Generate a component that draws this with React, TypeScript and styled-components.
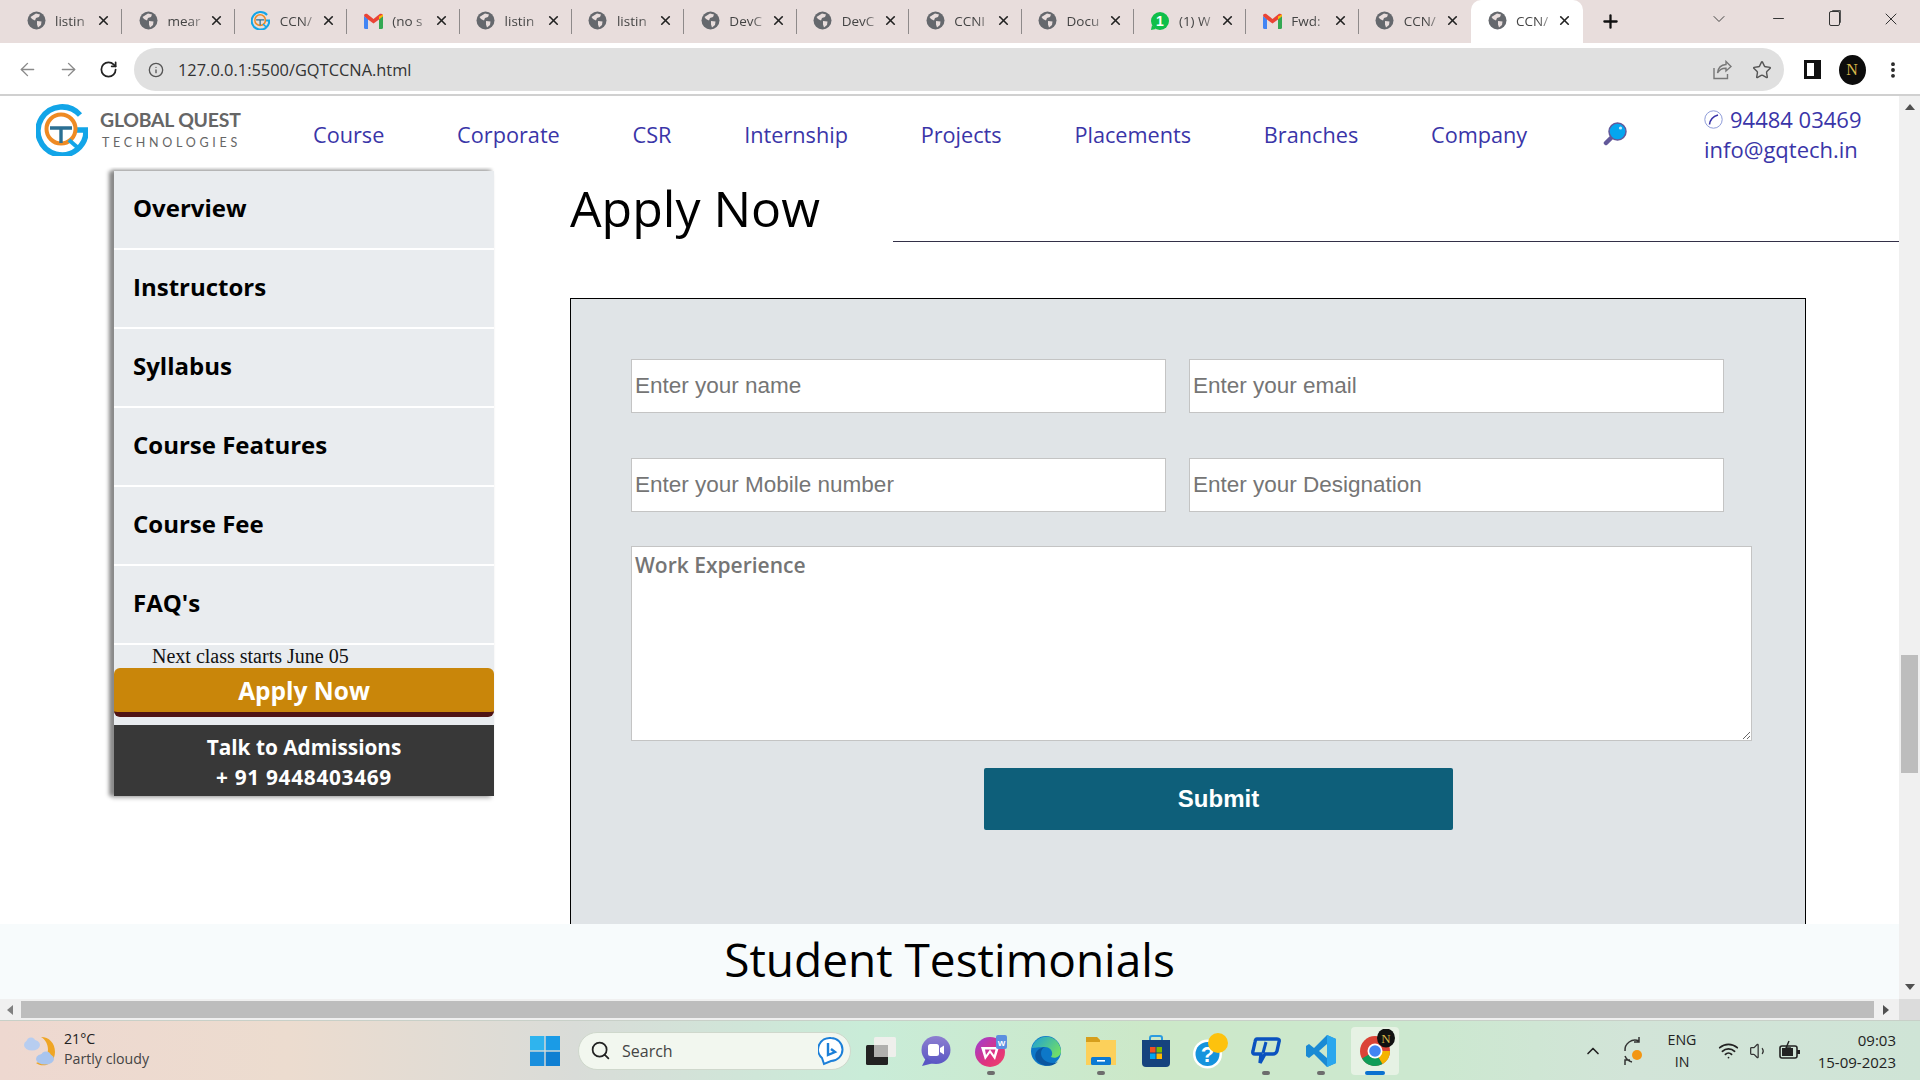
import React from 'react';
import styled, { createGlobalStyle } from 'styled-components';
import { ArrowLeft, ArrowRight, RotateCw, Info, Star, X, Plus, ChevronDown, Minus, EllipsisVertical, Search as SearchIcon, ChevronUp, Wifi, Volume1 } from 'lucide-react';

const GlobalStyle = createGlobalStyle`
  html, body {
    margin: 0;
    padding: 0;
    width: 1920px;
    height: 1080px;
    overflow: hidden;
    background: #fff;
    font-family: "Open Sans", "Liberation Sans", sans-serif;
  }
  * { box-sizing: border-box; }
`;

const tabs = [
  { label: 'listin', icon: 'globe' },
  { label: 'mear', icon: 'globe' },
  { label: 'CCN/', icon: 'gq' },
  { label: '(no s', icon: 'gmail' },
  { label: 'listin', icon: 'globe' },
  { label: 'listin', icon: 'globe' },
  { label: 'DevC', icon: 'globe' },
  { label: 'DevC', icon: 'globe' },
  { label: 'CCNI', icon: 'globe' },
  { label: 'Docu', icon: 'globe' },
  { label: '(1) W', icon: 'whatsapp' },
  { label: 'Fwd:', icon: 'gmail' },
  { label: 'CCN/', icon: 'globe' },
  { label: 'CCN/', icon: 'globe', active: true },
];

const navItems = ['Course', 'Corporate', 'CSR', 'Internship', 'Projects', 'Placements', 'Branches', 'Company'];
const sideItems = ['Overview', 'Instructors', 'Syllabus', 'Course Features', 'Course Fee', "FAQ's"];

const GlobeIcon = () => (
  <svg width="19" height="19" viewBox="0 0 19 19">
    <circle cx="9.5" cy="9.5" r="9" fill="#65686d" />
    <path d="M9 2.5 L13 3.5 L12 6 L9 7 L8 9.5 L5 8 L3.5 6 Z M10 10 L14.5 10.5 L14 14 L11 16.5 L10 13.5 Z" fill="#e8dddc" />
  </svg>
);

const GmailIcon = () => (
  <svg width="19" height="16" viewBox="0 0 19 16">
    <path d="M0 3 L0 14.5 Q0 16 1.5 16 L4 16 L4 6 Z" fill="#4285f4" />
    <path d="M15 6 L15 16 L17.5 16 Q19 16 19 14.5 L19 3 Z" fill="#34a853" />
    <path d="M0 3 Q0 0 3 0.8 L9.5 6 L16 0.8 Q19 0 19 3 L15 6.5 L9.5 10.5 L4 6.5 Z" fill="#ea4335" />
    <path d="M15 6.5 L19 3 L19 1.5 L15 3.5 Z" fill="#fbbc04" />
  </svg>
);

const WhatsIcon = () => (
  <svg width="20" height="20" viewBox="0 0 20 20">
    <circle cx="10" cy="10" r="9" fill="#0fbf4a" />
    <path d="M2 14 L1 19 L6 18 Z" fill="#0fbf4a" />
    <text x="10" y="15" fontSize="14" fontWeight="700" textAnchor="middle" fill="#fff" fontFamily="Liberation Sans">1</text>
  </svg>
);

const GqIcon = ({ size = 19 }: { size?: number }) => (
  <svg width={size} height={size} viewBox="0 0 52 52">
    <path d="M44 11 A24 24 0 1 0 50 26 L38 26" fill="none" stroke="#12a5e8" strokeWidth="5.5" />
    <circle cx="25" cy="25" r="14.5" fill="none" stroke="#ee8a23" strokeWidth="4" />
    <path d="M14 24 H36 M25 24 V39" fill="none" stroke="#2b6f93" strokeWidth="3.4" />
    <path d="M33 36 L41 43" stroke="#12a5e8" strokeWidth="4" />
  </svg>
);

const tabIcon = (name: string) => {
  if (name === 'gq') return <GqIcon />;
  if (name === 'gmail') return <GmailIcon />;
  if (name === 'whatsapp') return <WhatsIcon />;
  return <GlobeIcon />;
};

export default function App() {
  return (
    <Screen>
      <GlobalStyle />
      <TabStrip>
        {tabs.map((tab, i) => (
          <Tab key={i} $active={!!tab.active} $last={!!tab.active || i === tabs.length - 2}>
            <TabIcon>{tabIcon(tab.icon)}</TabIcon>
            <TabTitle>{tab.label}</TabTitle>
            <X size={15} strokeWidth={2.6} color="#222" />
          </Tab>
        ))}
        <NewTab><Plus size={21} strokeWidth={2.6} color="#111" /></NewTab>
        <WindowControls>
          <ChevronDown size={20} strokeWidth={1.2} color="#444" />
          <Minus size={17} strokeWidth={1.4} color="#333" />
          <RestoreIcon />
          <X size={20} strokeWidth={1.2} color="#333" />
        </WindowControls>
      </TabStrip>

      <AddressRow>
        <NavButtons>
          <ArrowLeft size={21} strokeWidth={1.6} color="#8a8a8a" />
          <ArrowRight size={21} strokeWidth={1.6} color="#8a8a8a" />
          <RotateCw size={19} strokeWidth={2.2} color="#222" />
        </NavButtons>
        <Omnibox>
          <Info size={16} strokeWidth={2} color="#555" />
          <Url>127.0.0.1:5500/GQTCCNA.html</Url>
          <OmniActions>
            <svg width="20" height="20" viewBox="0 0 20 20" fill="none" stroke="#777" strokeWidth="1.4">
              <path d="M14 1.5 L19 6.5 L14 11 V8.2 C10 8 7.5 9.5 5.5 13 C6 8 9 4.8 14 4.5 Z" />
              <path d="M2 8 V18.5 H15.5 V14" />
            </svg>
            <Star size={20} strokeWidth={1.7} color="#555" />
          </OmniActions>
        </Omnibox>
        <ProfileActions>
          <SidePanelIcon />
          <Avatar>N</Avatar>
          <EllipsisVertical size={20} strokeWidth={2.6} color="#222" />
        </ProfileActions>
      </AddressRow>

      <Viewport>
        <Page>
          <Header>
            <Brand>
              <GqIcon size={52} />
              <BrandText>
                <BrandName>GLOBAL QUEST</BrandName>
                <BrandSub>TECHNOLOGIES</BrandSub>
              </BrandText>
            </Brand>
            <Nav>
              {navItems.map((item) => <NavLink key={item}>{item}</NavLink>)}
              <svg width="24" height="24" viewBox="0 0 24 24">
                <path d="M10 14 L3 21" stroke="#62589a" strokeWidth="4.5" strokeLinecap="round" />
                <circle cx="14.5" cy="9.5" r="8.5" fill="#04a5ef" stroke="#62589a" strokeWidth="1.5" />
                <circle cx="17.5" cy="6" r="1.6" fill="#bfeafc" />
              </svg>
            </Nav>
            <Contact>
              <ContactLine>
                <svg width="19" height="19" viewBox="0 0 19 19" fill="none">
                  <circle cx="9.5" cy="9.5" r="8.7" stroke="#8d9bd8" strokeWidth="1" />
                  <path d="M5.5 14.5 C6 10 9 6.5 14 5" stroke="#3a35a8" strokeWidth="1.6" />
                </svg>
                94484 03469
              </ContactLine>
              <ContactLine>info@gqtech.in</ContactLine>
            </Contact>
          </Header>

          <Main>
            <Sidebar>
              {sideItems.map((item) => <SideItem key={item}>{item}</SideItem>)}
              <NextClass>Next class starts June 05</NextClass>
              <ApplyButton>Apply Now</ApplyButton>
              <Admissions>Talk to Admissions<AdmissionsPhone>+ 91 9448403469</AdmissionsPhone></Admissions>
            </Sidebar>
            <Content>
              <HeadingRow>
                <Heading>Apply Now</Heading>
                <HeadingRule />
              </HeadingRow>
              <FormBox>
                <FieldRow>
                  <Field placeholder="Enter your name" />
                  <Field placeholder="Enter your email" />
                </FieldRow>
                <FieldRow>
                  <Field placeholder="Enter your Mobile number" />
                  <Field placeholder="Enter your Designation" />
                </FieldRow>
                <Experience placeholder="Work Experience" />
                <Submit type="button">Submit</Submit>
              </FormBox>
            </Content>
          </Main>

          <Band>Student Testimonials</Band>
        </Page>
        <VScroll>
          <ArrowUp />
          <VThumb />
          <ArrowDown />
        </VScroll>
      </Viewport>

      <HScroll>
        <ArrowLeftShape />
        <HThumb />
        <ArrowRightShape />
        <Corner />
      </HScroll>

      <Taskbar>
        <Weather>
          <svg width="32" height="34" viewBox="0 0 32 34">
            <path d="M17 3 C27 9 27 25 12 29 C20 35 31 29 31 18 C31 9 25 3 17 3 Z" fill="#efa524" />
            <ellipse cx="8" cy="11" rx="8" ry="5.5" fill="#b7cdf0" />
            <ellipse cx="7" cy="8" rx="4.5" ry="4.5" fill="#b7cdf0" />
            <ellipse cx="21" cy="25" rx="9" ry="5.5" fill="#a9c5ee" />
            <ellipse cx="22" cy="22" rx="5" ry="4.5" fill="#a9c5ee" />
          </svg>
          <WeatherText>
            <span>21°C</span>
            <WeatherSub>Partly cloudy</WeatherSub>
          </WeatherText>
        </Weather>
        <TaskCenter>
          <svg width="30" height="30" viewBox="0 0 30 30">
            <rect width="14.3" height="14.3" fill="#2fb4ee" />
            <rect x="15.7" width="14.3" height="14.3" fill="#1a9be6" />
            <rect y="15.7" width="14.3" height="14.3" fill="#1a8fdd" />
            <rect x="15.7" y="15.7" width="14.3" height="14.3" fill="#0f7fd2" />
          </svg>
          <SearchPill>
            <SearchIcon size={21} strokeWidth={2} color="#222" />
            <SearchLabel>Search</SearchLabel>
            <svg width="26" height="30" viewBox="0 0 26 30" fill="none">
              <path d="M13 2 A11.5 11.5 0 0 1 13 25 L6 28 L4 22 A11.5 11.5 0 0 1 13 2 Z" stroke="#1b7fd8" strokeWidth="2" fill="#fff" />
              <path d="M10 7 V19 L17 16 L13 13" stroke="#1b7fd8" strokeWidth="2.4" />
            </svg>
          </SearchPill>
          <TaskIcon>
            <svg width="30" height="28" viewBox="0 0 30 28">
              <rect x="0" y="8" width="22" height="20" rx="1.5" fill="#222" />
              <rect x="8" y="0" width="22" height="20" rx="1.5" fill="#efefec" />
              <rect x="8" y="8" width="14" height="12" fill="#b0b0ae" />
            </svg>
          </TaskIcon>
          <TaskIcon>
            <svg width="30" height="30" viewBox="0 0 30 30">
              <defs>
                <linearGradient id="meetFill" x1="0" y1="0" x2="0" y2="1">
                  <stop offset="0" stopColor="#8d7fd0" />
                  <stop offset="1" stopColor="#5a56c4" />
                </linearGradient>
              </defs>
              <ellipse cx="15" cy="14" rx="14.5" ry="14" fill="url(#meetFill)" />
              <path d="M5 22 L1 30 L13 27 Z" fill="#5a56c4" />
              <rect x="7" y="8" width="11" height="12" rx="2.5" fill="#fff" />
              <path d="M19 12 L23 9.5 V18.5 L19 16 Z" fill="#fff" />
            </svg>
          </TaskIcon>
          <TaskIcon $running>
            <svg width="32" height="32" viewBox="0 0 32 32">
              <defs>
                <linearGradient id="wpsFill" x1="0" y1="0" x2="1" y2="1">
                  <stop offset="0" stopColor="#9a3fd8" />
                  <stop offset="0.6" stopColor="#e0327e" />
                  <stop offset="1" stopColor="#f0456a" />
                </linearGradient>
              </defs>
              <circle cx="15" cy="17" r="15" fill="url(#wpsFill)" />
              <path d="M6 12 H24 L20 25 L15 18 L10 25 Z M10 14.5 L11 20 L15 14.5 L19 20 L20.5 14.5 Z" fill="#fff" fillRule="evenodd" />
              <rect x="21" y="0" width="11" height="14" rx="2" fill="#5b8fe0" />
              <text x="26.5" y="10.5" fontSize="8" fontWeight="700" textAnchor="middle" fill="#fff" fontFamily="Liberation Sans">W</text>
            </svg>
          </TaskIcon>
          <TaskIcon>
            <svg width="30" height="30" viewBox="0 0 30 30">
              <defs>
                <linearGradient id="edgeTop" x1="0" y1="0" x2="1" y2="0.6">
                  <stop offset="0" stopColor="#1c9ed8" />
                  <stop offset="1" stopColor="#6fdc6a" />
                </linearGradient>
              </defs>
              <circle cx="15" cy="15" r="15" fill="#0d78c8" />
              <path d="M1 12 C4 -3 28 -4 30 15 C30 21 24 23 20 21 C23 17 20 11 14 11 C8 11 3 12 1 12 Z" fill="url(#edgeTop)" />
              <path d="M14 11 C7 14 9 27 22 27 C25 27 27 26 28 24 C24 31 12 32 6 25 C2 20 5 12 14 11 Z" fill="#0a57a0" />
            </svg>
          </TaskIcon>
          <TaskIcon $running>
            <svg width="30" height="28" viewBox="0 0 30 28">
              <path d="M0 0 H11 L14 3 H30 V28 H0 Z" fill="#fcd05a" />
              <path d="M0 0 H11 L14 3 V5 H0 Z" fill="#d69e1c" />
              <rect x="5" y="20" width="20" height="8" rx="1.5" fill="#0c7ad3" />
              <rect x="11" y="23" width="8" height="1.6" fill="#fff" />
            </svg>
          </TaskIcon>
          <TaskIcon>
            <svg width="30" height="32" viewBox="0 0 30 32">
              <path d="M9 7 V3 Q9 1 11 1 H19 Q21 1 21 3 V7" fill="none" stroke="#2a9be0" strokeWidth="2" />
              <path d="M1 5 H29 V28 Q29 32 25 32 H5 Q1 32 1 28 Z" fill="#16437e" />
              <rect x="9" y="12" width="5.5" height="5.5" fill="#f25022" />
              <rect x="15.5" y="12" width="5.5" height="5.5" fill="#7fba00" />
              <rect x="9" y="18.5" width="5.5" height="5.5" fill="#00a4ef" />
              <rect x="15.5" y="18.5" width="5.5" height="5.5" fill="#ffb900" />
            </svg>
          </TaskIcon>
          <TaskIcon>
            <svg width="36" height="36" viewBox="0 0 36 36">
              <circle cx="14.5" cy="21" r="14.5" fill="#fff" />
              <circle cx="14.5" cy="21" r="12" fill="#1593dd" />
              <text x="14.5" y="29" fontSize="22" fontWeight="700" textAnchor="middle" fill="#fff" fontFamily="Liberation Sans">?</text>
              <circle cx="25" cy="10" r="10" fill="#fdc20d" />
            </svg>
          </TaskIcon>
          <TaskIcon $running>
            <svg width="30" height="28" viewBox="0 0 30 28" fill="none">
              <path d="M6 2 H26 Q29 2 28 5 L26 14 Q25 17 22 17 H14 L9 26 L10 17 H4 Q1 17 2 14 L4 5 Q4.5 2 6 2 Z" stroke="#0a52bf" strokeWidth="3.4" />
              <path d="M15 5 L12 16" stroke="#0a52bf" strokeWidth="3" />
            </svg>
          </TaskIcon>
          <TaskIcon $running>
            <svg width="30" height="32" viewBox="0 0 30 32">
              <path d="M21 0 L30 4 V28 L21 32 L8 19 L3 23 L0 21 V11 L3 9 L8 13 Z M21 9 L13 16 L21 23 Z" fill="#1a8ad4" fillRule="evenodd" />
              <path d="M21 0 L30 4 V28 L21 32 Z" fill="#2aa7ee" />
            </svg>
          </TaskIcon>
          <ActiveApp>
            <svg width="42" height="44" viewBox="0 0 42 44">
              <circle cx="21" cy="22" r="15" fill="#db4437" />
              <path d="M21 22 L8 29.5 A15 15 0 0 0 28.5 35 Z" fill="#0f9d58" />
              <path d="M21 22 L28.5 35 A15 15 0 0 0 36 22 Z" fill="#f4b400" />
              <circle cx="21" cy="22" r="7.5" fill="#fff" />
              <circle cx="21" cy="22" r="5.8" fill="#4285f4" />
              <ellipse cx="32" cy="9" rx="9" ry="9.5" fill="#111" />
              <text x="32" y="14" fontSize="13" textAnchor="middle" fill="#d8b84a" fontFamily="Liberation Serif">N</text>
            </svg>
            <ActiveBar />
          </ActiveApp>
        </TaskCenter>
        <Tray>
          <ChevronUp size={20} strokeWidth={2} color="#222" />
          <SyncIcon width="24" height="30" viewBox="0 0 24 30" fill="none" stroke="#333" strokeWidth="1.5">
            <path d="M3 15 A10 10 0 0 1 17 5 M17 1 V6 H12" />
            <path d="M3 20 A10 10 0 0 0 10 26 M3 29 V24 H8" />
            <circle cx="15" cy="19" r="5" fill="#f39614" stroke="none" />
          </SyncIcon>
          <Lang>ENG<br />IN</Lang>
          <TrayIcons>
            <Wifi size={21} strokeWidth={2} color="#222" />
            <Volume1 size={20} strokeWidth={1.5} color="#333" />
            <svg width="22" height="22" viewBox="0 0 22 22" fill="none">
              <rect x="1" y="6" width="17" height="12" rx="2" stroke="#222" strokeWidth="1.6" />
              <rect x="3" y="8" width="11" height="8" fill="#222" />
              <path d="M18 10 H21 V14 H18 Z" fill="#222" />
              <path d="M10 1 L7 8 H11 L8 14" stroke="#222" strokeWidth="1.4" />
            </svg>
          </TrayIcons>
          <Clock>09:03<br />15-09-2023</Clock>
        </Tray>
      </Taskbar>
    </Screen>
  );
}

const Screen = styled.div`
  width: 1920px;
  height: 1080px;
  display: flex;
  flex-direction: column;
  overflow: hidden;
`;

const TabStrip = styled.div`
  height: 43px;
  flex: none;
  display: flex;
  align-items: stretch;
  padding-left: 10px;
  background: #e8dddc;
`;

const Tab = styled.div<{ $active: boolean; $last: boolean }>`
  width: 112.4px;
  flex: none;
  display: flex;
  align-items: center;
  padding: 0 11px 2px 16px;
  color: #444;
  position: relative;
  background: ${(p) => (p.$active ? '#fff' : 'transparent')};
  border-radius: ${(p) => (p.$active ? '10px 10px 0 0' : '0')};

  &::after {
    content: '';
    display: ${(p) => (p.$last ? 'none' : 'block')};
    position: absolute;
    right: 0;
    top: 9px;
    height: 25px;
    width: 1px;
    background: #8e8a8a;
  }
`;

const TabIcon = styled.span`
  width: 20px;
  height: 20px;
  flex: none;
  display: flex;
  align-items: center;
  justify-content: center;
`;

const TabTitle = styled.span`
  flex: 1;
  min-width: 0;
  margin-left: 9px;
  font-size: 13.5px;
  font-family: "Open Sans", sans-serif;
  white-space: nowrap;
  -webkit-mask-image: linear-gradient(to right, #000 22px, rgba(0, 0, 0, 0.3) 36px);
  mask-image: linear-gradient(to right, #000 22px, rgba(0, 0, 0, 0.3) 36px);
`;

const NewTab = styled.div`
  width: 56px;
  display: flex;
  align-items: center;
  justify-content: center;
  padding-bottom: 1px;
`;

const WindowControls = styled.div`
  margin-left: auto;
  width: 292px;
  display: flex;
  align-items: center;
  justify-content: space-between;
  padding: 0 19px 6px 72px;
`;

const RestoreIcon = styled.span`
  width: 11px;
  height: 15px;
  border: 1.5px solid #333;
  border-radius: 2px;
  box-shadow: 2px -2px 0 -1px #555;
`;

const AddressRow = styled.div`
  height: 53px;
  flex: none;
  display: flex;
  align-items: center;
  background: #fff;
  border-bottom: 2px solid #d0d0d0;
  padding-top: 2px;
`;

const NavButtons = styled.div`
  width: 134px;
  flex: none;
  display: flex;
  align-items: center;
  gap: 20px;
  padding-left: 17px;
`;

const Omnibox = styled.div`
  width: 1650px;
  height: 43px;
  flex: none;
  display: flex;
  align-items: center;
  padding: 0 12px 0 14px;
  background: #e0e0e0;
  border-radius: 22px;
`;

const Url = styled.span`
  margin-left: 14px;
  font-size: 16.4px;
  color: #333;
`;

const OmniActions = styled.div`
  margin-left: auto;
  display: flex;
  align-items: center;
  gap: 20px;
`;

const ProfileActions = styled.div`
  flex: 1;
  display: flex;
  align-items: center;
  justify-content: space-between;
  padding: 0 17px 0 20px;
`;

const SidePanelIcon = styled.span`
  width: 17px;
  height: 19px;
  border: 3px solid #111;
  border-right-width: 7px;
`;

const Avatar = styled.span`
  width: 27px;
  height: 30px;
  border-radius: 50%;
  background: #0c0c0c;
  color: #d8b84a;
  font: 16px "Liberation Serif", serif;
  display: flex;
  align-items: center;
  justify-content: center;
`;

const Viewport = styled.div`
  height: 903px;
  flex: none;
  display: flex;
`;

const Page = styled.div`
  width: 1899px;
  flex: none;
  display: flex;
  flex-direction: column;
  background: #fff;
`;

const Header = styled.header`
  height: 71px;
  flex: none;
  display: flex;
  align-items: flex-start;
  padding: 8px 0 0 36px;
`;

const Brand = styled.div`
  width: 277px;
  flex: none;
  display: flex;
  align-items: center;
  gap: 12px;
`;

const BrandText = styled.div`
  display: flex;
  flex-direction: column;
  gap: 5px;
  margin-top: -1px;
  font-family: Lato, "Open Sans", sans-serif;
  color: #666;
`;

const BrandName = styled.span`
  font-size: 19.4px;
  font-weight: 700;
  line-height: 22px;
  letter-spacing: -0.2px;
`;

const BrandSub = styled.span`
  font-size: 12.5px;
  line-height: 14px;
  letter-spacing: 3.7px;
  margin-left: 2px;
`;

const Nav = styled.nav`
  display: flex;
  align-items: center;
  gap: 72.7px;
  height: 60px;
  font-size: 21.7px;
  color: #3a35a8;
  width: 1391px;
  flex: none;

  svg {
    margin-left: 3px;
  }
`;

const NavLink = styled.a`
  color: #3a35a8;
`;

const Contact = styled.div`
  display: flex;
  flex-direction: column;
  color: #3a35a8;
  font-size: 22px;
  line-height: 30px;
`;

const ContactLine = styled.div`
  display: flex;
  align-items: center;
  gap: 7px;
`;

const Main = styled.main`
  height: 757px;
  flex: none;
  display: flex;
  align-items: flex-start;
  overflow: hidden;
  padding: 4px 0 0 114px;
`;

const Sidebar = styled.aside`
  width: 380px;
  flex: none;
  background: #e9ecef;
  box-shadow: -5px 0 4px #8a8a8a, -2px -2px 3px rgba(0, 0, 0, 0.2), -2px 3px 4px rgba(0, 0, 0, 0.15);
  display: flex;
  flex-direction: column;
  margin-right: 76px;
`;

const SideItem = styled.div`
  height: 79px;
  flex: none;
  display: flex;
  align-items: center;
  padding: 0 0 4px 19px;
  border-bottom: 2px solid #fff;
  font-size: 24px;
  font-weight: 700;
  color: #000;
`;

const NextClass = styled.div`
  height: 23px;
  padding-left: 38px;
  font: 20px/23px "Liberation Serif", serif;
  color: #111;
`;

const ApplyButton = styled.div`
  height: 49px;
  display: flex;
  align-items: center;
  justify-content: center;
  background: #c9860a;
  border-bottom: 5px solid #501414;
  border-radius: 6px;
  color: #fff;
  font-size: 24.5px;
  font-weight: 700;
`;

const Admissions = styled.div`
  margin-top: 8px;
  height: 71px;
  padding-top: 7px;
  background: #383838;
  color: #fff;
  text-align: center;
  font-size: 20.8px;
  font-weight: 700;
  line-height: 30px;
`;

const AdmissionsPhone = styled.div`
  letter-spacing: 0.7px;
`;

const Content = styled.div`
  flex: 1;
  min-width: 0;
`;

const HeadingRow = styled.div`
  display: flex;
  height: 71px;
  align-items: flex-end;
`;

const Heading = styled.h1`
  margin: 0;
  width: 323px;
  flex: none;
  font-size: 50px;
  font-weight: 400;
  line-height: 67px;
  color: #000;
`;

const HeadingRule = styled.div`
  flex: 1;
  height: 1px;
  background: #333048;
`;

const FormBox = styled.form`
  margin-top: 56px;
  width: 1236px;
  height: 700px;
  padding: 60px 0 0 60px;
  background: #e0e4e7;
  border: 1px solid #000;
`;

const FieldRow = styled.div`
  display: flex;
  gap: 23px;
  margin-bottom: 45px;

  &:nth-of-type(2) {
    margin-bottom: 34px;
  }
`;

const Field = styled.input`
  width: 535px;
  height: 54px;
  padding: 0 3px;
  background: #fff;
  border: 1px solid #c4c4c4;
  font: 22.5px "Liberation Sans", Arial, sans-serif;
  outline: none;

  &::placeholder { color: #757575; }
`;

const Experience = styled.textarea`
  display: block;
  width: 1121px;
  height: 195px;
  padding: 4px 3px;
  background: #fff;
  border: 1px solid #c4c4c4;
  font: 600 21px "Open Sans", sans-serif;
  outline: none;

  &::placeholder { color: #757575; }
`;

const Submit = styled.button`
  display: block;
  width: 469px;
  height: 62px;
  margin: 27px 0 0 353px;
  background: #0e5f7a;
  border: none;
  border-radius: 2px;
  color: #fff;
  font: 700 24px "Liberation Sans", Arial, sans-serif;
`;

const Band = styled.div`
  height: 75px;
  flex: none;
  background: #f7fbfc;
  text-align: center;
  font-size: 46px;
  line-height: 70px;
  color: #000;
`;

const VScroll = styled.div`
  flex: 1;
  position: relative;
  background: #f0f0f0;
  display: flex;
  flex-direction: column;
  align-items: center;
`;

const ArrowUp = styled.span`
  margin-top: 8px;
  border: 5px solid transparent;
  border-top: 0;
  border-bottom: 6px solid #505050;
`;

const VThumb = styled.div`
  width: 17px;
  height: 118px;
  margin-top: 545px;
  background: #bdbdbd;
`;

const ArrowDown = styled.span`
  margin-top: auto;
  margin-bottom: 9px;
  border: 5px solid transparent;
  border-bottom: 0;
  border-top: 6px solid #505050;
`;

const HScroll = styled.div`
  height: 21px;
  flex: none;
  display: flex;
  align-items: center;
  background: #f0f0f0;
`;

const ArrowLeftShape = styled.span`
  margin-left: 7px;
  border: 5px solid transparent;
  border-left: 0;
  border-right: 6px solid #808080;
`;

const HThumb = styled.div`
  width: 1853px;
  height: 17px;
  margin-left: 8px;
  background: #bdbdbd;
`;

const ArrowRightShape = styled.span`
  margin-left: 9px;
  border: 5px solid transparent;
  border-right: 0;
  border-left: 6px solid #505050;
`;

const Corner = styled.span`
  margin-left: auto;
  width: 21px;
  height: 21px;
  background: #dcdcdc;
`;

const Taskbar = styled.div`
  height: 60px;
  flex: none;
  display: flex;
  align-items: center;
  border-top: 1px solid #c8d0c8;
  background: linear-gradient(90deg, #eed8d0 0%, #ecdccf 15%, #d9dcd8 30%, #c9ecd8 45%, #cce8c8 60%, #cce8d0 75%, #d2e4d8 85%, #cfe4d6 100%);
`;

const Weather = styled.div`
  width: 530px;
  flex: none;
  display: flex;
  align-items: center;
  gap: 8px;
  padding-left: 24px;
`;

const WeatherText = styled.div`
  display: flex;
  flex-direction: column;
  margin-top: -4px;
  font-size: 14.2px;
  line-height: 20px;
  color: #222;
`;

const WeatherSub = styled.span`
  color: #444;
`;

const TaskCenter = styled.div`
  display: flex;
  align-items: center;
`;

const SearchPill = styled.div`
  width: 273px;
  height: 38px;
  margin: 0 2px 0 18px;
  padding: 0 6px 0 11px;
  display: flex;
  align-items: center;
  background: #f2f7ef;
  border: 1px solid #cfd8cc;
  border-radius: 19px;
`;

const SearchLabel = styled.span`
  flex: 1;
  margin-left: 11px;
  font-size: 16px;
  color: #444;
`;

const TaskIcon = styled.div<{ $running?: boolean }>`
  width: 55px;
  height: 48px;
  flex: none;
  position: relative;
  display: flex;
  align-items: center;
  justify-content: center;

  &::after {
    content: '';
    display: ${(p) => (p.$running ? 'block' : 'none')};
    position: absolute;
    bottom: 0;
    left: 24px;
    width: 8px;
    height: 4px;
    border-radius: 2px;
    background: #6d6d6d;
  }
`;

const ActiveApp = styled.div`
  width: 48px;
  height: 48px;
  margin-left: 3px;
  position: relative;
  display: flex;
  align-items: center;
  justify-content: center;
  background: #e6f2e4;
  border-radius: 4px;
`;

const ActiveBar = styled.span`
  position: absolute;
  bottom: 0;
  left: 14px;
  width: 20px;
  height: 4px;
  border-radius: 2px;
  background: #0a72d0;
`;

const Tray = styled.div`
  flex: 1;
  display: flex;
  align-items: center;
  padding: 0 24px 0 184px;
`;

const SyncIcon = styled.svg`
  margin-left: 19px;
`;

const Lang = styled.div`
  width: 40px;
  margin-left: 16px;
  text-align: center;
  font-size: 14.2px;
  line-height: 22px;
  color: #222;
`;

const TrayIcons = styled.div`
  display: flex;
  align-items: center;
  gap: 10px;
  margin-left: 16px;
`;

const Clock = styled.div`
  margin-left: auto;
  text-align: right;
  font-size: 15px;
  line-height: 22px;
  color: #222;
`;
